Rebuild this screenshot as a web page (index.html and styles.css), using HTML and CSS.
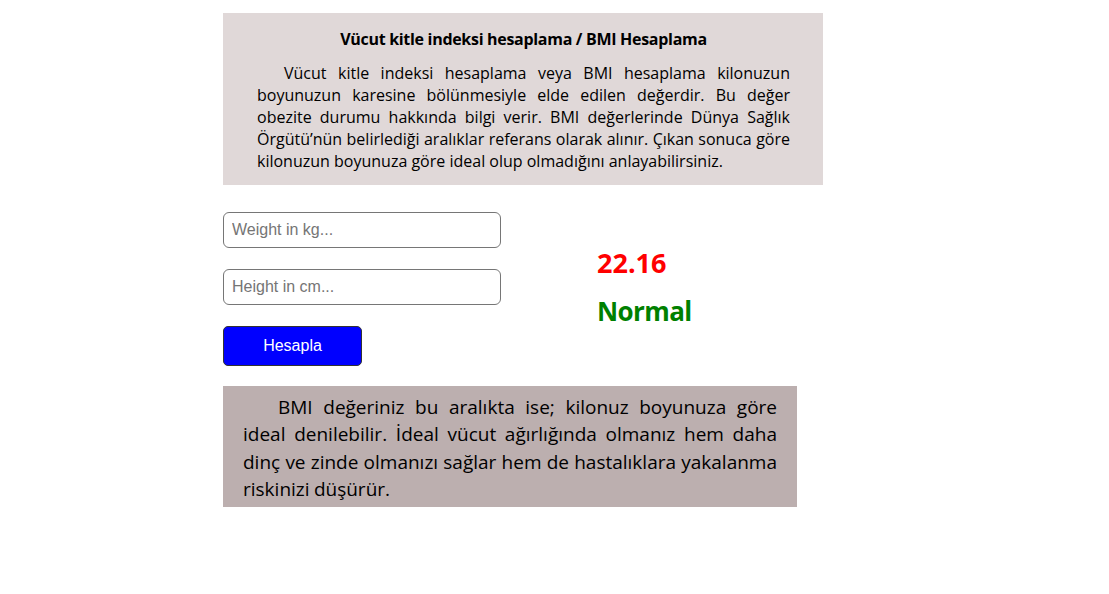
FILE: index.html
```html
<!DOCTYPE html>
<html lang="tr">
<head>
<meta charset="utf-8">
<title>BMI Hesaplama</title>
<link rel="stylesheet" href="styles.css">
</head>
<body>
<main class="page">
  <section class="intro">
    <h3 class="intro-title">Vücut kitle indeksi hesaplama / BMI Hesaplama</h3>
    <p class="intro-text">Vücut kitle indeksi hesaplama veya BMI hesaplama kilonuzun boyunuzun karesine bölünmesiyle elde edilen değerdir. Bu değer obezite durumu hakkında bilgi verir. BMI değerlerinde Dünya Sağlık Örgütü’nün belirlediği aralıklar referans olarak alınır. Çıkan sonuca göre kilonuzun boyunuza göre ideal olup olmadığını anlayabilirsiniz.</p>
  </section>
  <section class="calc">
    <form class="form">
      <input class="field" type="text" placeholder="Weight in kg...">
      <input class="field" type="text" placeholder="Height in cm...">
      <button class="btn" type="button">Hesapla</button>
    </form>
    <div class="result">
      <div class="value">22.16</div>
      <div class="status">Normal</div>
    </div>
  </section>
  <section class="info">
    <p class="info-text">BMI değeriniz bu aralıkta ise; kilonuz boyunuza göre ideal denilebilir. İdeal vücut ağırlığında olmanız hem daha dinç ve zinde olmanızı sağlar hem de hastalıklara yakalanma riskinizi düşürür.</p>
  </section>
</main>
</body>
</html>
```
FILE: styles.css
```css
* { box-sizing: border-box; }
html, body { margin: 0; padding: 0; background: #fff; }
body { font-family: "Open Sans", "Noto Sans", sans-serif; color: #000; }
.page { padding: 13px 0 0 223px; }
.intro {
  width: 600px;
  background: #e0d8d8;
  padding: 15px 33px 13px 34px;
}
.intro-title {
  margin: 0 0 12px;
  text-align: center;
  font-size: 16px;
  line-height: 22px;
  font-weight: 700;
  letter-spacing: -0.3px;
}
.intro-text {
  margin: 0;
  font-size: 16px;
  line-height: 22px;
  text-align: justify;
  text-indent: 27px;
  letter-spacing: 0;
}
.calc {
  display: flex;
  padding-top: 27px;
  align-items: flex-start;
}
.form {
  display: flex;
  flex-direction: column;
  align-items: flex-start;
  width: 278px;
  gap: 21px;
}
.field {
  width: 278px;
  height: 36px;
  border: 1px solid #767676;
  border-radius: 6px;
  padding: 0 8px;
  font-family: "Liberation Sans", Arial, sans-serif;
  font-size: 16px;
  color: #000;
  outline: none;
}
.field::placeholder { color: #757575; }
.btn {
  width: 139px;
  height: 40px;
  background: #0000ff;
  color: #fff;
  border: 1px solid #333;
  border-radius: 5px;
  font-family: "Liberation Sans", Arial, sans-serif;
  font-size: 16px;
}
.result {
  margin-left: 96px;
  padding-top: 33px;
  font-weight: 700;
}
.value {
  color: #ff0000;
  font-size: 27px;
  line-height: 36px;
}
.status {
  color: #008000;
  font-size: 26px;
  line-height: 36px;
  margin-top: 12px;
  letter-spacing: -0.6px;
}
.info {
  width: 574px;
  margin-top: 20px;
  background: #bcafaf;
  padding: 8px 20px 4px;
}
.info-text {
  margin: 0;
  font-size: 19px;
  line-height: 27.3px;
  text-align: justify;
  text-indent: 35px;
  letter-spacing: 0;
  word-spacing: -0.6px;
}
```
